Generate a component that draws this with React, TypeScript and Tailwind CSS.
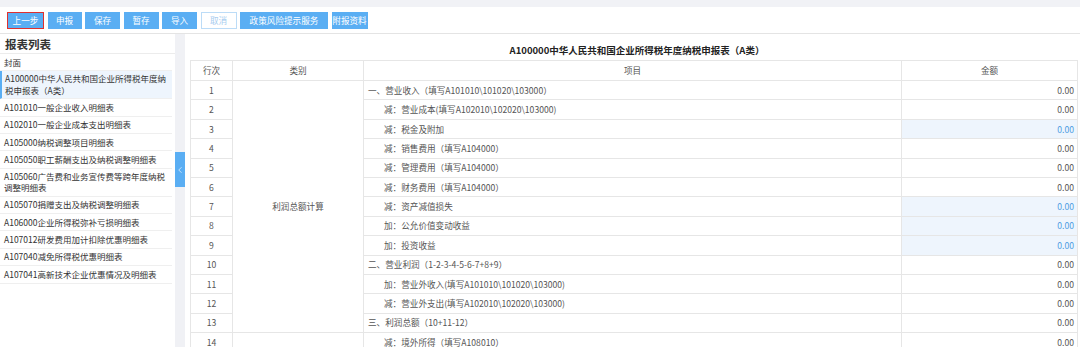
import { ChevronLeft } from 'lucide-react';

const font = { fontFamily: '"Microsoft YaHei", "Noto Sans CJK SC", "Noto Sans", sans-serif' };

const buttons = [
  { label: '上一步', w: 'w-[37px]', active: true },
  { label: '申报', w: 'w-[34px]' },
  { label: '保存', w: 'w-[35px]' },
  { label: '暂存', w: 'w-[35px]' },
  { label: '导入', w: 'w-[35px]' },
  { label: '取消', w: 'w-[36px]', ghost: true },
  { label: '政策风险提示服务', w: 'w-[88px]' },
  { label: '附报资料', w: 'w-[36px]' },
];

const reports = [
  '封面',
  'A100000中华人民共和国企业所得税年度纳税申报表（A类）',
  'A101010一般企业收入明细表',
  'A102010一般企业成本支出明细表',
  'A105000纳税调整项目明细表',
  'A105050职工薪酬支出及纳税调整明细表',
  'A105060广告费和业务宣传费等跨年度纳税调整明细表',
  'A105070捐赠支出及纳税调整明细表',
  'A106000企业所得税弥补亏损明细表',
  'A107012研发费用加计扣除优惠明细表',
  'A107040减免所得税优惠明细表',
  'A107041高新技术企业优惠情况及明细表',
];

const rows = [
  { no: 1, item: '一、营业收入（填写A101010\\101020\\103000）', sub: false },
  { no: 2, item: '减：营业成本(填写A102010\\102020\\103000)', sub: true },
  { no: 3, item: '减：税金及附加', sub: true, edit: true },
  { no: 4, item: '减：销售费用（填写A104000）', sub: true },
  { no: 5, item: '减：管理费用（填写A104000）', sub: true },
  { no: 6, item: '减：财务费用（填写A104000）', sub: true },
  { no: 7, item: '减：资产减值损失', sub: true, edit: true },
  { no: 8, item: '加：公允价值变动收益', sub: true, edit: true },
  { no: 9, item: '加：投资收益', sub: true, edit: true },
  { no: 10, item: '二、营业利润（1-2-3-4-5-6-7+8+9）', sub: false },
  { no: 11, item: '加：营业外收入(填写A101010\\101020\\103000)', sub: true },
  { no: 12, item: '减：营业外支出(填写A102010\\102020\\103000)', sub: true },
  { no: 13, item: '三、利润总额（10+11-12）', sub: false },
  { no: 14, item: '减：境外所得（填写A108010）', sub: true },
];

export default function App() {
  return (
    <div className="w-[1080px] h-[347px] overflow-hidden bg-white text-[#333]" style={font}>
      <div className="h-[7px] bg-[#f1f2f6]" />
      {/* toolbar */}
      <div className="h-[27px] flex items-center gap-[3.5px] pl-[7px] border-b border-[#e4e4e4]">
        {buttons.map((b) => (
          <div
            key={b.label}
            className={`${b.w} h-[17px] flex items-center justify-center whitespace-nowrap text-[8.6px] ${
              b.ghost
                ? 'bg-white border border-[#bcdcf7] text-[#a9cdef]'
                : b.active
                ? 'bg-[#5aaef3] text-white border border-[#e0302f]'
                : 'bg-[#5aaef3] text-white'
            }`}
          >
            {b.label}
          </div>
        ))}
      </div>
      <div className="flex h-[313px]">
        {/* sidebar */}
        <div className="w-[175px] shrink-0 pt-[2px]">
          <div className="h-[18px] flex items-center pl-[5px] text-[11.5px] font-bold text-[#333] border-b border-[#ececec]">
            报表列表
          </div>
          <div className="w-[172px]">
            {reports.map((r, i) => (
              <div
                key={r}
                className={`px-[4px] text-[8.5px] leading-[11.4px] border-b border-[#efefef] ${
                  i === 1 ? 'bg-[#eef5fd] border-l-2 border-l-[#5aaef3] pl-[3px] py-[2px]' : i === 6 ? 'py-[2px]' : 'py-[2.5px]'
                }`}
              >
                {r}
              </div>
            ))}
          </div>
        </div>
        {/* splitter */}
        <div className="w-[10px] shrink-0 bg-[#f0f1f5] pt-[118px]">
          <div className="h-[35px] bg-[#5aaef3] flex items-center justify-center text-white">
            <ChevronLeft size={10} strokeWidth={1.5} />
          </div>
        </div>
        {/* main */}
        <div className="flex-1 pl-[5px] pr-[3px]">
          <div className="h-[26px] flex items-end justify-center pb-[3px] text-[9.5px] font-bold text-[#222] pl-[6px]">
            A100000中华人民共和国企业所得税年度纳税申报表（A类）
          </div>
          <table className="table-fixed border-collapse w-[887px] text-[8.6px] text-[#555]">
            <colgroup>
              <col className="w-[42px]" />
              <col className="w-[131px]" />
              <col className="w-[538px]" />
              <col className="w-[176px]" />
            </colgroup>
            <thead>
              <tr className="h-[20px]">
                <th className="border border-[#e6e6e6] font-normal">行次</th>
                <th className="border border-[#e6e6e6] font-normal">类别</th>
                <th className="border border-[#e6e6e6] font-normal">项目</th>
                <th className="border border-[#e6e6e6] font-normal">金额</th>
              </tr>
            </thead>
            <tbody>
              {rows.map((r) => (
                <tr key={r.no} className="h-[19.4px]">
                  <td className="border border-[#e6e6e6] text-center">{r.no}</td>
                  {r.no === 1 && (
                    <td rowSpan={13} className="border border-[#e6e6e6] text-center align-middle">
                      利润总额计算
                    </td>
                  )}
                  {r.no === 14 && <td className="border border-[#e6e6e6]" />}
                  <td className={`border border-[#e6e6e6] ${r.sub ? 'pl-[20px]' : 'pl-[4px]'}`}>{r.item}</td>
                  <td
                    className={`border border-[#e6e6e6] text-right pr-[3px] ${
                      r.edit ? 'bg-[#eef5fd] text-[#4d9de3]' : ''
                    }`}
                  >
                    0.00
                  </td>
                </tr>
              ))}
            </tbody>
          </table>
        </div>
      </div>
    </div>
  );
}
